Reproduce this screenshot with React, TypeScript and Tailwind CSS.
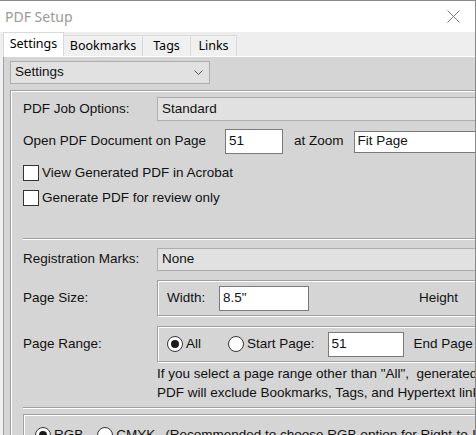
import React from 'react';

const Etched = ({ className = '', children }: { className?: string; children?: React.ReactNode }) => (
  <div className={`border border-[#a0a0a0] shadow-[inset_1px_1px_0_#fff,1px_1px_0_#fff] ${className}`}>{children}</div>
);

const Separator = ({ className = '' }: { className?: string }) => (
  <div className={`h-[2px] border-t border-[#a0a0a0] bg-white ${className}`} />
);

const Combo = ({ value, className = '' }: { value: string; className?: string }) => (
  <div className={`h-[23px] bg-[#e1e1e1] border border-[#adadad] flex items-center pl-[4px] ${className}`}>
    {value}
  </div>
);

const TextBox = ({ value, className = '' }: { value: string; className?: string }) => (
  <div className={`h-[25px] bg-white border border-[#7a7a7a] flex items-center pl-[3px] ${className}`}>{value}</div>
);

const CheckBox = ({ label }: { label: string }) => (
  <div className="flex items-center h-[16px]">
    <div className="w-[16px] h-[16px] bg-white border border-[#333]" />
    <span className="ml-[3px]">{label}</span>
  </div>
);

const Radio = ({ checked, label }: { checked?: boolean; label: string }) => (
  <div className="flex items-center">
    <div className="w-[16px] h-[16px] rounded-full bg-white border border-[#333] flex items-center justify-center">
      {checked && <div className="w-[8px] h-[8px] rounded-full bg-[#1a1a1a]" />}
    </div>
    <span className="ml-[3px]">{label}</span>
  </div>
);

const Row = ({ label, children, className = '' }: { label: string; children: React.ReactNode; className?: string }) => (
  <div className={`flex items-center ${className}`}>
    <div className="w-[134px] shrink-0">{label}</div>
    {children}
  </div>
);

export default function App() {
  const tabs = [
    { name: 'Bookmarks', w: 'w-[79px]' },
    { name: 'Tags', w: 'w-[48px]' },
    { name: 'Links', w: 'w-[46px]' },
  ];

  return (
    <div className="w-[476px] h-[435px] overflow-hidden bg-white border-r border-t border-[#8a8a8a] font-['Liberation_Sans',Arial,sans-serif] text-[13.5px] text-[#111]">
      {/* Title bar */}
      <div className="h-[31px] flex items-center justify-between pl-[5px] pr-[15px]">
        <span className="font-['Noto_Sans',sans-serif] text-[14px] text-[#9a9a9a]">PDF Setup</span>
        <svg width="13" height="13" viewBox="0 0 13 13" className="text-[#777]">
          <path d="M0.5 0.5 L12.5 12.5 M12.5 0.5 L0.5 12.5" stroke="currentColor" strokeWidth="1" />
        </svg>
      </div>

      {/* Tabs */}
      <div className="h-[24px] flex items-end bg-[#eeeeee] pl-[3px] font-['Noto_Sans',sans-serif] text-[12.5px] text-black">
        <div className="h-[24px] w-[61px] bg-white border border-b-0 border-[#d9d9d9] flex items-center justify-center">Settings</div>
        {tabs.map((t) => (
          <div
            key={t.name}
            className={`h-[21px] ${t.w} bg-[#f0f0f0] border border-l-0 border-b-0 border-[#d9d9d9] flex items-center justify-center`}
          >
            {t.name}
          </div>
        ))}
      </div>

      {/* Tab page */}
      <div className="pl-[3px] bg-[#f0f0f0] h-full">
        <div className="border-l border-[#a0a0a0] border-t border-t-white bg-[#d5d5d5] pl-[6px] pt-[4px] h-full">
          <div className="w-[200px] h-[23px] bg-[#e1e1e1] border border-[#adadad] flex items-center justify-between pl-[4px] pr-[6px]">
            <span>Settings</span>
            <svg width="9" height="6" viewBox="0 0 9 6">
              <path d="M0.5 0.5 L4.5 4.5 L8.5 0.5" fill="none" stroke="#555" strokeWidth="1" />
            </svg>
          </div>

          {/* Inner panel */}
          <div className="mt-[6px] border-l border-t border-[#a0a0a0] shadow-[inset_1px_1px_0_#fff] pl-[12px] pt-[6px] w-[520px] h-full">
            <Row label="PDF Job Options:">
              <Combo value="Standard" className="w-[340px] h-[24px]" />
            </Row>

            <div className="flex items-center mt-[8px] h-[25px]">
              <span className="w-[202px] shrink-0">Open PDF Document on Page</span>
              <TextBox value="51" className="w-[58px]" />
              <span className="ml-[11px]">at Zoom</span>
              <div className="ml-[10px] w-[134px] h-[22px] bg-white border border-[#7a7a7a] flex items-center justify-between pl-[3px] pr-[3px]">
                <span>Fit Page</span>
                <span className="text-[8px] text-[#444]">▼</span>
              </div>
            </div>

            <div className="mt-[11px]">
              <CheckBox label="View Generated PDF in Acrobat" />
            </div>
            <div className="mt-[9px]">
              <CheckBox label="Generate PDF for review only" />
            </div>

            <Separator className="mt-[32px]" />

            <Row label="Registration Marks:" className="mt-[8px]">
              <Combo value="None" className="w-[340px]" />
            </Row>

            <Row label="Page Size:" className="mt-[9px]">
              <Etched className="w-[340px] h-[36px] flex items-center pl-[9px]">
                <span className="w-[52px]">Width:</span>
                <TextBox value={'8.5"'} className="w-[90px]" />
                <span className="ml-[110px]">Height</span>
              </Etched>
            </Row>

            <Row label="Page Range:" className="mt-[10px]">
              <Etched className="w-[340px] h-[36px] flex items-center pl-[9px]">
                <Radio checked label="All" />
                <div className="ml-[27px]">
                  <Radio label="Start Page:" />
                </div>
                <TextBox value="51" className="ml-[13px] w-[76px]" />
                <span className="ml-[10px]">End Page</span>
              </Etched>
            </Row>

            <div className="mt-[2px] pl-[134px] leading-[19px] whitespace-nowrap">
              <div>If you select a page range other than "All",&nbsp; generated</div>
              <div>PDF will exclude Bookmarks, Tags, and Hypertext links</div>
            </div>

            <Separator className="mt-[5px]" />

            <Etched className="mt-[5px] w-[500px] h-[40px] flex items-start pt-[10px] pl-[11px] whitespace-nowrap">
              <Radio checked label="RGB" />
              <div className="ml-[14px]">
                <Radio label="CMYK" />
              </div>
              <span className="ml-[10px]">(Recommended to choose RGB option for Right-to-Left</span>
            </Etched>
          </div>
        </div>
      </div>
    </div>
  );
}
